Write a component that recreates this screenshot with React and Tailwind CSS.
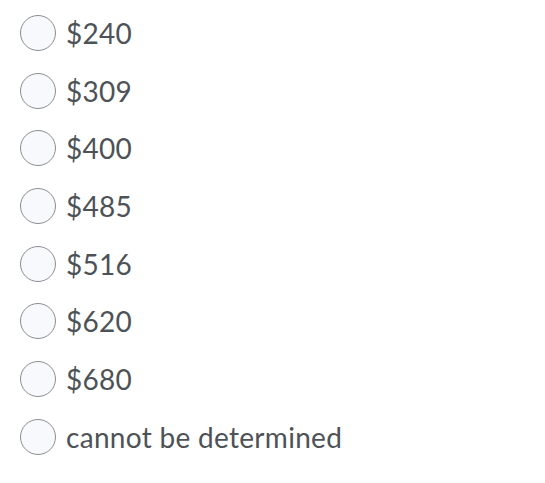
const options = ['$240', '$309', '$400', '$485', '$516', '$620', '$680', 'cannot be determined'];

export default function App() {
	return (
		<div className="w-[545px] h-[483px] bg-white pt-[15px] pl-[20px]" style={{ fontFamily: 'Lato, "Noto Sans", sans-serif' }}>
			<ul className="flex flex-col gap-[21.7px]">
				{options.map((opt, i) => (
					<li key={i} className="flex items-center h-[36px]">
						<span className="w-[36px] h-[36px] rounded-full border border-[#8a8d91] bg-[#f7f9fd] shrink-0" />
						<span className="ml-[10px] text-[28px] tracking-[0.3px] leading-none text-[#4d5257]">{opt}</span>
					</li>
				))}
			</ul>
		</div>
	);
}
